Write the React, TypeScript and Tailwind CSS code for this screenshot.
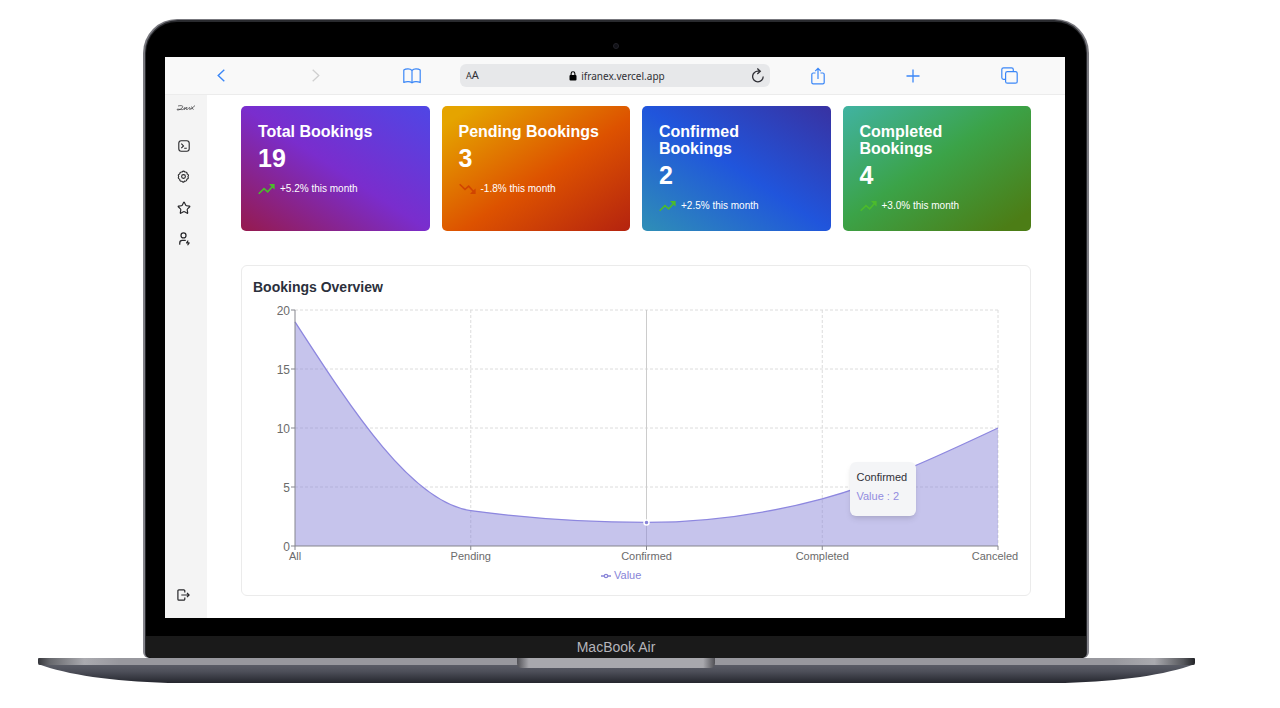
import { Star } from 'lucide-react';
import { TbUserBolt } from 'react-icons/tb';

const stats = [
  { title: 'Total Bookings', value: 19, note: '+5.2% this month', up: true, bg: 'bg-[linear-gradient(to_top_right,#961a4d,#7a2dcd,#4f46e5)]' },
  { title: 'Pending Bookings', value: 3, note: '-1.8% this month', up: false, bg: 'bg-[linear-gradient(to_bottom_right,#e5a400_8%,#dd5200_55%,#b4230f)]' },
  { title: 'Confirmed Bookings', value: 2, note: '+2.5% this month', up: true, bg: 'bg-[linear-gradient(to_top_right,#2f8fb6,#2055dc,#3832a2)]' },
  { title: 'Completed Bookings', value: 4, note: '+3.0% this month', up: true, bg: 'bg-[linear-gradient(to_bottom_right,#41b3a2,#3ba348,#4c7d16_92%)]' },
];

const data = [
  { name: 'All', value: 19 },
  { name: 'Pending', value: 3 },
  { name: 'Confirmed', value: 2 },
  { name: 'Completed', value: 4 },
  { name: 'Canceled', value: 10 },
];

const LEFT = 42;
const RIGHT = 745;
const TOP = 10;
const BOTTOM = 246;
const xAt = (i: number) => LEFT + ((RIGHT - LEFT) * i) / (data.length - 1);
const yAt = (v: number) => BOTTOM - ((BOTTOM - TOP) * v) / 20;

function monotoneCurve() {
  const h = xAt(1) - xAt(0);
  const ys = data.map((d) => yAt(d.value));
  const s = ys.slice(1).map((y, i) => (y - ys[i]) / h);
  const t = ys.map((_, i) => {
    if (i === 0 || i === ys.length - 1) return 0;
    const a = s[i - 1];
    const b = s[i];
    if (a * b <= 0) return 0;
    return Math.sign(a) * 2 * Math.min(Math.abs(a), Math.abs(b), Math.abs(a + b) / 4);
  });
  t[0] = (3 * s[0] - t[1]) / 2;
  t[t.length - 1] = (3 * s[s.length - 1] - t[t.length - 2]) / 2;
  let d = `M${xAt(0)},${ys[0]}`;
  for (let i = 1; i < ys.length; i++) {
    const k = h / 3;
    d += `C${xAt(i - 1) + k},${ys[i - 1] + k * t[i - 1]} ${xAt(i) - k},${ys[i] - k * t[i]} ${xAt(i)},${ys[i]}`;
  }
  return d;
}

function Trend({ up }: { up: boolean }) {
  return (
    <svg viewBox="0 0 17 12" className={up ? 'h-3 w-[17px] text-[#4cbb2c]' : 'h-3 w-[17px] -scale-y-100 text-[#d04400]'} fill="none" stroke="currentColor" strokeWidth="1.6" aria-hidden="true">
      <path d="M.7 10.800 6 5.600l3.700 3.200 5-5.600" />
      <path d="M11 1h5.600v5.600L14.800 5l-2.200-2.300z" fill="currentColor" stroke="none" />
    </svg>
  );
}

function StatCard({ title, value, note, up, bg }: (typeof stats)[number]) {
  return (
    <article className={`${bg} h-[125px] rounded-[5px] px-[17px] pt-[17px] text-white`}>
      <h2 className="text-base leading-[17px] font-bold">{title}</h2>
      <p className="pt-1 text-[25px] leading-7 font-bold">{value}</p>
      <p className="flex items-center gap-[5px] pt-2 text-[10px] leading-[18px]">
        <Trend up={up} />
        {note}
      </p>
    </article>
  );
}

function Gear() {
  return (
    <svg viewBox="0 0 24 24" className="size-[13px]" fill="none" stroke="currentColor" strokeWidth="2" strokeLinejoin="round" aria-hidden="true">
      <path d="M9.300 3.800Q12 .2 14.700 3.800q4.300-.7 3.900 3.600 4.200 1.600 1.600 4.900 2.200 3.700-2 4.800-.4 4.400-4.300 3.400-2.200 3.800-4.700.2-4.300.6-4.200-3.800-4.100-1.500-1.800-5Q.8 8.500 5.200 7.200 5 3.100 9.300 3.800z" />
      <circle cx="12" cy="12" r="3.500" />
    </svg>
  );
}

function Sidebar() {
  const item = 'flex h-[31px] w-full items-center justify-center';
  return (
    <nav aria-label="Main" className="flex w-[42px] shrink-0 flex-col items-center bg-[#f4f4f4] pr-[5px] text-[#27272a]">
      <a href="#home" aria-label="Home" className="flex h-[35px] w-full items-start justify-center pt-[10px] pl-1">
        <svg viewBox="0 0 40 12" className="h-[6px] w-5" fill="none" stroke="currentColor" strokeWidth="1.300" aria-hidden="true">
          <path d="M4 2c8-2 12 0 8 4S2 11 2 9s9 1 12 0 2-4 4-4-3 5-1 4 3-5 5-4-4 3-1 4 4-4 6-4-1 5 1 4 3-4 4-3M30 9C33 6 36 2 38 1M31 3c2 2 2 6 4 6" />
        </svg>
      </a>
      <a href="#dashboard" aria-label="Dashboard" className={item}>
        <svg viewBox="0 0 12 12" className="size-3" fill="none" stroke="currentColor" strokeWidth="1.100" aria-hidden="true"><rect x=".8" y=".8" width="10.400" height="10.400" rx="2.400" /><path d="m3.300 3.700 2.200 2.200-2.200 2.200M6.200 8.200h2.600" /></svg>
      </a>
      <a href="#settings" aria-label="Settings" className={item}><Gear /></a>
      <a href="#favorites" aria-label="Favorites" className={item}><Star className="size-[14px]" strokeWidth={2} /></a>
      <a href="#account" aria-label="Account" className={item}><TbUserBolt className="size-[15px]" /></a>
      <button type="button" aria-label="Log out" className="mt-auto mb-[17px] flex w-full items-center justify-center">
        <svg viewBox="0 0 13 12" className="h-3 w-[13px]" fill="none" stroke="currentColor" strokeWidth="1.200" aria-hidden="true"><path d="M7.800 3.500V1.800Q7.800.8 6.800.8H1.900Q.9.800.9 1.800v8.400q0 1 1 1h4.900q1 0 1-1V8.500M4.300 6h7.500M10 3.900 12.100 6 10 8.100" /></svg>
      </button>
    </nav>
  );
}

function BrowserBar() {
  const btn = 'flex items-center justify-center text-[#3b87f7]';
  return (
    <header className="grid h-[38px] grid-cols-[repeat(3,minmax(0,1fr))_310px_repeat(3,minmax(0,1fr))] items-center border-b border-[#ececec] bg-[#f9f9f9] px-2">
      <button type="button" aria-label="Back" className={btn}>
        <svg viewBox="0 0 8 13" className="h-[13px] w-2" fill="none" stroke="currentColor" strokeWidth="1.400" aria-hidden="true"><path d="M7.300.7 1.200 6.500l6.100 5.800" /></svg>
      </button>
      <button type="button" aria-label="Forward" className="flex items-center justify-center text-[#d0d0d0]">
        <svg viewBox="0 0 8 13" className="h-[13px] w-2" fill="none" stroke="currentColor" strokeWidth="1.300" aria-hidden="true"><path d="M.7.7l6.100 5.800-6.100 5.800" /></svg>
      </button>
      <button type="button" aria-label="Bookmarks" className={btn}>
        <svg viewBox="0 0 18 16" className="h-4 w-[18px]" fill="none" stroke="currentColor" strokeWidth="1.200" strokeLinejoin="round" aria-hidden="true">
          <path d="M9 2.500C8 1.300 6.800.9 5 .9S1.800 1.200.8 2v12.500c1.200-.6 2.500-.9 4.200-.9s3 .4 4 1.300c1-.9 2.300-1.300 4-1.300s3 .3 4.200.9V2c-1-.8-2.400-1.100-4.200-1.100S10 1.300 9 2.500zM9 2.500v12.400" />
        </svg>
      </button>
      <div className="flex h-[23px] items-center rounded-md bg-[#e7e8ea] px-[6px] text-[#303036]">
        <button type="button" aria-label="Text size" className="flex w-4 items-baseline font-['Noto_Sans',sans-serif] leading-4"><span className="text-[9px]">A</span><span className="text-[11px]">A</span></button>
        <p className="flex flex-1 items-center justify-center gap-1 font-['Noto_Sans',sans-serif] text-[10px] leading-4">
          <svg viewBox="0 0 8 10" className="h-[10px] w-2" aria-hidden="true"><rect x=".5" y="4" width="7" height="5.500" rx="1" fill="#000" /><path d="M2.100 4.500V2.700a1.900 1.900 0 0 1 3.800 0v1.800" fill="none" stroke="#000" strokeWidth="1.100" /></svg>
          ifranex.vercel.app
        </p>
        <button type="button" aria-label="Reload" className="flex w-3">
          <svg viewBox="0 0 12 15" className="h-[15px] w-3" fill="none" stroke="currentColor" strokeWidth="1.300" aria-hidden="true"><path d="M11.200 8.500A5.300 5.300 0 1 1 6 3.200h2M5.300.5l3 2.700-3 2.800" /></svg>
        </button>
      </div>
      <button type="button" aria-label="Share" className={btn}>
        <svg viewBox="0 0 14 18" className="h-[18px] w-[14px]" fill="none" stroke="currentColor" strokeWidth="1.200" aria-hidden="true"><path d="M4.500 6H2.200C1.300 6 .8 6.500.8 7.400v8c0 .9.500 1.400 1.400 1.400h9.600c.9 0 1.400-.5 1.400-1.400v-8c0-.9-.5-1.400-1.400-1.400H9.500M7 12V1.500M4.200 4.200 7 1.400l2.800 2.800" /></svg>
      </button>
      <button type="button" aria-label="New tab" className={btn}>
        <svg viewBox="0 0 14 14" className="size-[14px]" stroke="currentColor" strokeWidth="1.300" aria-hidden="true"><path d="M7 .5v13M.5 7h13" /></svg>
      </button>
      <button type="button" aria-label="Show tabs" className={btn}>
        <svg viewBox="0 0 17 17" className="size-[17px]" fill="none" stroke="currentColor" strokeWidth="1.200" aria-hidden="true"><rect x="4.600" y="4.600" width="11.600" height="11.600" rx="1.800" /><path d="M4.500 12.300H2.600C1.400 12.300.8 11.700.8 10.500V2.600C.8 1.400 1.400.8 2.600.8h7.900c1.200 0 1.800.6 1.800 1.800v1.900" /></svg>
      </button>
    </header>
  );
}

function Chart() {
  const curve = monotoneCurve();
  return (
    <section className="mt-[34px] rounded-md border border-[#ebebeb] px-[11px] pt-3">
      <h2 className="text-sm leading-[18px] font-bold text-[#2b303c]">Bookings Overview</h2>
      <div className="relative mt-1">
        <svg viewBox="0 0 766 295" className="block w-full overflow-visible" role="img" aria-label="Bookings by status">
          <g stroke="#dcdcdc" strokeDasharray="3 2">
            {[5, 10, 15, 20].map((v) => <line key={v} x1={LEFT} x2={RIGHT} y1={yAt(v)} y2={yAt(v)} />)}
            {[1, 3, 4].map((i) => <line key={i} x1={xAt(i)} x2={xAt(i)} y1={TOP} y2={BOTTOM} />)}
          </g>
          <line x1={xAt(2)} x2={xAt(2)} y1={TOP} y2={BOTTOM} stroke="#cccccc" />
          <path d={`${curve}V${BOTTOM}H${LEFT}Z`} fill="#8884d8" fillOpacity=".48" />
          <path d={curve} fill="none" stroke="#8d87df" strokeWidth="1.300" />
          <g stroke="#85858d">
            <path d={`M${LEFT} ${TOP}V${BOTTOM}H${RIGHT}`} fill="none" />
            {[0, 5, 10, 15, 20].map((v) => <line key={v} x1={LEFT - 4} x2={LEFT} y1={yAt(v)} y2={yAt(v)} />)}
            {data.map((d, i) => <line key={d.name} x1={xAt(i)} x2={xAt(i)} y1={BOTTOM} y2={BOTTOM + 4} />)}
          </g>
          <g fill="#6b6b6b">
            <g fontSize="12">
              {[0, 5, 10, 15, 20].map((v) => <text key={v} x={LEFT - 5} y={yAt(v) + 5} textAnchor="end">{v}</text>)}
            </g>
            <g fontSize="11">
              {data.map((d, i) => <text key={d.name} x={i === 4 ? xAt(i) - 3 : xAt(i)} y={BOTTOM + 14} textAnchor="middle">{d.name}</text>)}
            </g>
          </g>
          <circle cx={xAt(2)} cy={yAt(2)} r="2.500" fill="#8884d8" stroke="#fff" strokeWidth="1.500" />
          <g stroke="#8884d8" fill="none">
            <path d="M348 276h3M355 276h3" strokeWidth="1.300" />
            <circle cx="353" cy="276" r="1.700" strokeWidth="1.200" />
          </g>
          <text x="361" y="279" fontSize="11" fill="#8884d8">Value</text>
        </svg>
        <div role="tooltip" className="absolute top-[55%] left-[78%] h-[54px] w-[66px] rounded-md bg-[#f4f5f7] px-[6px] pt-[6px] text-[11px] leading-[19px] whitespace-nowrap shadow-md">
          <p className="text-[#303038]">Confirmed</p>
          <p className="text-[#928cdf]">Value : 2</p>
        </div>
      </div>
    </section>
  );
}

export default function App() {
  return (
    <div className="min-h-screen bg-white pt-[19px] pr-[85px] pb-6 pl-[38px] font-['Liberation_Sans',Arial,sans-serif]">
      <div className="mr-[106px] ml-[105px] rounded-t-[34px] rounded-b-[6px] bg-linear-to-b from-[#77777d] to-[#85858c] px-[2px] pt-px">
        <div className="rounded-t-[33px] rounded-b-[5px] bg-[#292a2e] px-px pt-[2px]">
          <div className="overflow-hidden rounded-t-[31px] rounded-b-[5px] bg-black">
            <div className="flex h-[35px] items-center justify-center pt-3">
              <span className="size-[6px] rounded-full border border-[#222229] bg-[#111117]" />
            </div>
            <div className="mr-[21px] ml-[19px] bg-white">
              <BrowserBar />
              <div className="flex">
                <Sidebar />
                <main className="min-w-0 flex-1 px-[34px] pt-[11px] pb-[22px]">
                  <div className="grid grid-cols-4 gap-x-3">
                    {stats.map((s) => <StatCard key={s.title} {...s} />)}
                  </div>
                  <Chart />
                </main>
              </div>
            </div>
            <div className="mt-[18px] bg-[#1a1a1a] text-center text-sm leading-[22px] text-[#b5b5ba]">MacBook Air</div>
          </div>
        </div>
      </div>
      <svg viewBox="0 0 1157 26" className="block w-full" preserveAspectRatio="none" aria-hidden="true">
        <defs>
          <linearGradient id="rim">
            <stop offset="0" stopColor="#35363b" /><stop offset=".01" stopColor="#66676c" /><stop offset=".04" stopColor="#aaaaaf" /><stop offset=".07" stopColor="#98989e" />
            <stop offset=".93" stopColor="#98989e" /><stop offset=".965" stopColor="#aaaaaf" /><stop offset=".99" stopColor="#56575c" /><stop offset="1" stopColor="#222327" />
          </linearGradient>
          <linearGradient id="under" x2="0" y2="1">
            <stop offset="0" stopColor="#5c5e68" /><stop offset=".4" stopColor="#4d4f59" /><stop offset="1" stopColor="#25262e" />
          </linearGradient>
          <linearGradient id="notch">
            <stop offset="0" stopColor="#505055" /><stop offset=".06" stopColor="#a8a8ad" /><stop offset=".94" stopColor="#a8a8ad" /><stop offset="1" stopColor="#505055" />
          </linearGradient>
        </defs>
        <path d="M0 6C30 17 73 23 130 25h897c57-2 100-8 130-19z" fill="url(#under)" />
        <path d="M1 0h1155q1 0 1 1v4q0 2-2 2H2Q0 7 0 5V1q0-1 1-1" fill="url(#rim)" />
        <path d="M479 0h198v5q0 5-5 5H484q-5 0-5-5z" fill="url(#notch)" />
      </svg>
    </div>
  );
}
